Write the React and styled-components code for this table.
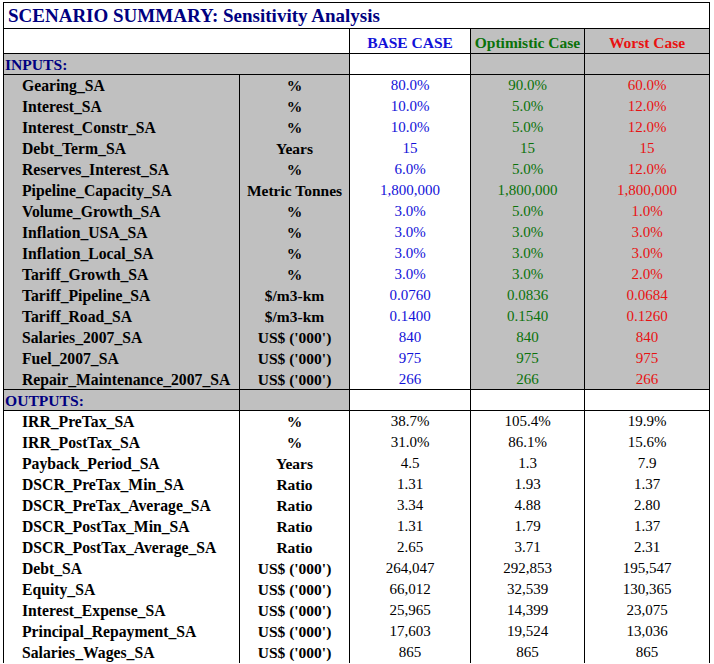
import React from 'react'
import styled, { createGlobalStyle } from 'styled-components'

const GlobalStyle = createGlobalStyle`
  html, body {
    margin: 0;
    padding: 0;
    background: #ffffff;
  }
  body {
    font-family: "Liberation Serif", "Times New Roman", serif;
  }
`

const GREY = '#c0c0c0'
const tone = {
  base: '#1212d8',
  opt: '#0a720a',
  worst: '#e81212',
  out: '#000000',
}

const inputs = [
  ['Gearing_SA', '%', '80.0%', '90.0%', '60.0%'],
  ['Interest_SA', '%', '10.0%', '5.0%', '12.0%'],
  ['Interest_Constr_SA', '%', '10.0%', '5.0%', '12.0%'],
  ['Debt_Term_SA', 'Years', '15', '15', '15'],
  ['Reserves_Interest_SA', '%', '6.0%', '5.0%', '12.0%'],
  ['Pipeline_Capacity_SA', 'Metric Tonnes', '1,800,000', '1,800,000', '1,800,000'],
  ['Volume_Growth_SA', '%', '3.0%', '5.0%', '1.0%'],
  ['Inflation_USA_SA', '%', '3.0%', '3.0%', '3.0%'],
  ['Inflation_Local_SA', '%', '3.0%', '3.0%', '3.0%'],
  ['Tariff_Growth_SA', '%', '3.0%', '3.0%', '2.0%'],
  ['Tariff_Pipeline_SA', '$/m3-km', '0.0760', '0.0836', '0.0684'],
  ['Tariff_Road_SA', '$/m3-km', '0.1400', '0.1540', '0.1260'],
  ['Salaries_2007_SA', "US$ ('000')", '840', '840', '840'],
  ['Fuel_2007_SA', "US$ ('000')", '975', '975', '975'],
  ['Repair_Maintenance_2007_SA', "US$ ('000')", '266', '266', '266'],
]

const outputs = [
  ['IRR_PreTax_SA', '%', '38.7%', '105.4%', '19.9%'],
  ['IRR_PostTax_SA', '%', '31.0%', '86.1%', '15.6%'],
  ['Payback_Period_SA', 'Years', '4.5', '1.3', '7.9'],
  ['DSCR_PreTax_Min_SA', 'Ratio', '1.31', '1.93', '1.37'],
  ['DSCR_PreTax_Average_SA', 'Ratio', '3.34', '4.88', '2.80'],
  ['DSCR_PostTax_Min_SA', 'Ratio', '1.31', '1.79', '1.37'],
  ['DSCR_PostTax_Average_SA', 'Ratio', '2.65', '3.71', '2.31'],
  ['Debt_SA', "US$ ('000')", '264,047', '292,853', '195,547'],
  ['Equity_SA', "US$ ('000')", '66,012', '32,539', '130,365'],
  ['Interest_Expense_SA', "US$ ('000')", '25,965', '14,399', '23,075'],
  ['Principal_Repayment_SA', "US$ ('000')", '17,603', '19,524', '13,036'],
  ['Salaries_Wages_SA', "US$ ('000')", '865', '865', '865'],
]

export default function App() {
  return (
    <>
      <GlobalStyle />
      <Page>
        <Sheet>
          <Title>SCENARIO SUMMARY: Sensitivity Analysis</Title>

          <Cell $span={2} $h={25} $bottom />
          <Head $h={25} $color={tone.base} $bottom>BASE CASE</Head>
          <Head $h={25} $color={tone.opt} $grey $bottom>Optimistic Case</Head>
          <Head $h={25} $color={tone.worst} $grey $bottom>Worst Case</Head>

          <Section $span={2} $grey $bottom>INPUTS:</Section>
          <Cell $bottom />
          <Cell $grey $bottom />
          <Cell $grey $bottom />

          {inputs.map(([name, unit, base, opt, worst], i) => {
            const last = i === inputs.length - 1
            return (
              <React.Fragment key={name}>
                <Name $grey $bottom={last}>{name}</Name>
                <Unit $grey $bottom={last}>{unit}</Unit>
                <Value $color={tone.base} $bottom={last}>{base}</Value>
                <Value $color={tone.opt} $grey $bottom={last}>{opt}</Value>
                <Value $color={tone.worst} $grey $bottom={last}>{worst}</Value>
              </React.Fragment>
            )
          })}

          <Section $grey $bottom>OUTPUTS:</Section>
          <Cell $grey $bottom />
          <Cell $bottom />
          <Cell $bottom />
          <Cell $bottom />

          {outputs.map(([name, unit, base, opt, worst]) => (
            <React.Fragment key={name}>
              <Name>{name}</Name>
              <Unit>{unit}</Unit>
              <Value $color={tone.out}>{base}</Value>
              <Value $color={tone.out}>{opt}</Value>
              <Value $color={tone.out}>{worst}</Value>
            </React.Fragment>
          ))}
        </Sheet>
      </Page>
    </>
  )
}

const Page = styled.div`
  width: 714px;
  height: 664px;
  overflow: hidden;
  padding: 2px 0 0 3px;
  box-sizing: border-box;
`

const Sheet = styled.div`
  display: grid;
  grid-template-columns: 236px 110px 121px 114px 125px;
  border-left: 1px solid #000;
  border-top: 1px solid #000;
  width: max-content;
`

const Cell = styled.div`
  box-sizing: border-box;
  height: ${p => p.$h || 21}px;
  grid-column: span ${p => p.$span || 1};
  background: ${p => (p.$grey ? GREY : '#ffffff')};
  border-right: 1px solid #000;
  border-bottom: ${p => (p.$bottom ? '1px solid #000' : '0')};
  display: flex;
  align-items: center;
  font-size: 15px;
  line-height: 17px;
  white-space: nowrap;
  overflow: hidden;
`

const Title = styled(Cell)`
  grid-column: 1 / -1;
  height: 26px;
  border-bottom: 1px solid #000;
  align-items: flex-end;
  padding: 0 0 2px 4px;
  font-size: 19px;
  line-height: 21px;
  font-weight: bold;
  color: #000080;
`

const Head = styled(Cell)`
  justify-content: center;
  align-items: flex-end;
  padding-bottom: 2px;
  font-size: 15.5px;
  font-weight: bold;
  color: ${p => p.$color};
`

const Section = styled(Cell)`
  padding-left: 1px;
  font-size: 15.6px;
  font-weight: bold;
  color: #000080;
`

const Name = styled(Cell)`
  padding-left: 18px;
  font-size: 15.7px;
  font-weight: bold;
  color: #000;
`

const Unit = styled(Cell)`
  justify-content: center;
  font-size: 15.5px;
  font-weight: bold;
  color: #000;
`

const Value = styled(Cell)`
  justify-content: center;
  color: ${p => p.$color};
`
